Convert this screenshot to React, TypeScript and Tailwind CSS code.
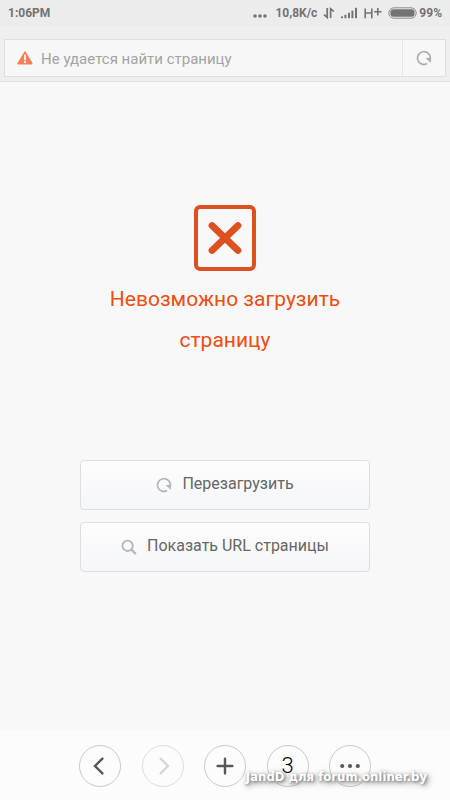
import type { ReactNode } from 'react';

interface IconProps {
  className?: string;
}

function ReloadIcon({ className = '' }: IconProps) {
  return (
    <svg viewBox="0 0 16 16" className={className} fill="none" aria-hidden="true">
      <path
        d="M11.2 13.6 A6.4 6.4 0 1 1 14.3 8.6"
        stroke="currentColor"
        strokeWidth="1.7"
      />
      <path d="M9.6 8.2 L15.2 7.4 L14.8 12.8 Z" fill="currentColor" />
    </svg>
  );
}

function SearchIcon({ className = '' }: IconProps) {
  return (
    <svg viewBox="0 0 16 16" className={className} fill="none" stroke="currentColor" aria-hidden="true">
      <circle cx="6.6" cy="6.8" r="5.2" strokeWidth="1.8" />
      <path d="M10.2 10.4 L14.8 15" strokeWidth="2.2" />
    </svg>
  );
}

function WarningIcon({ className = '' }: IconProps) {
  return (
    <svg viewBox="0 0 16 14" className={className} aria-hidden="true">
      <path
        d="M8 1.4 L14.6 12.4 H1.4 Z"
        fill="#fb7f56"
        stroke="#fb7f56"
        strokeWidth="2"
        strokeLinejoin="round"
      />
      <path d="M8 4.4 V8.4" stroke="#fff" strokeWidth="1.8" strokeLinecap="round" />
      <circle cx="8" cy="11.2" r="1.1" fill="#fff" />
    </svg>
  );
}

function BrokenPageIcon() {
  return (
    <svg viewBox="0 0 62 66" className="h-[66px] w-[62px]" fill="none" stroke="#dd5120" aria-hidden="true">
      <rect x="2" y="2" width="58" height="62" rx="4" strokeWidth="4" />
      <path d="M18 20.5 L44 45.5 M44 20.5 L18 45.5" strokeWidth="6.8" strokeLinecap="round" />
    </svg>
  );
}

function StatusBar() {
  return (
    <div className="flex h-[26px] items-center justify-between bg-[#ececec] px-2 text-xs font-bold text-[#737373]">
      <span>1:06PM</span>
      <div className="flex items-center">
        <svg viewBox="0 0 14 12" className="mr-2 h-3 w-3.5" fill="currentColor" aria-hidden="true">
          <circle cx="2" cy="9" r="1.8" />
          <circle cx="7" cy="9" r="1.8" />
          <circle cx="12" cy="9" r="1.8" />
        </svg>
        <span>10,8K/c</span>
        <svg viewBox="0 0 12 12" className="ml-1.5 h-3 w-3" fill="none" stroke="currentColor" strokeWidth="1.7" aria-hidden="true">
          <path d="M4.2 1 V10.4 L1 7.6" />
          <path d="M7.6 11 V1.8 L10.8 4.4" />
        </svg>
        <svg viewBox="0 0 17 12" className="ml-1.5 h-3 w-[17px]" fill="currentColor" aria-hidden="true">
          <rect x="0" y="9.4" width="2" height="1.8" />
          <rect x="3.4" y="7.8" width="2" height="3.4" />
          <rect x="7" y="5.8" width="2" height="5.4" />
          <rect x="10.4" y="3.6" width="2" height="7.6" />
          <rect x="14" y="0.8" width="2" height="10.4" />
        </svg>
        <svg viewBox="0 0 18 12" className="ml-1.5 h-3 w-[18px]" fill="none" stroke="currentColor" strokeWidth="1.6" aria-hidden="true">
          <path d="M1.2 1.4 V11.2 M7.8 1.4 V11.2 M1.2 6 H7.8" />
          <path d="M13.8 1 V8.4 M10.2 4.7 H17.6" />
        </svg>
        <svg viewBox="0 0 29 12" className="ml-1.5 h-3 w-[29px]" aria-hidden="true">
          <rect x="0.8" y="0.8" width="27.4" height="10.4" rx="5.2" fill="none" stroke="#8c8c8c" />
          <rect x="2.4" y="2.2" width="24.2" height="7.6" rx="3.2" fill="#737373" />
        </svg>
        <span className="ml-0.5">99%</span>
      </div>
    </div>
  );
}

function AddressBar() {
  return (
    <div className="px-1 pt-[13px] pb-1">
      <div className="flex h-[38px] border border-[#dfdfdf] bg-[#f7f7f7]">
        <div className="flex min-w-0 flex-1 items-center pl-3">
          <WarningIcon className="h-3.5 w-4 shrink-0" />
          <input
            type="text"
            aria-label="Адрес"
            defaultValue="Не удается найти страницу"
            className="ml-2 min-w-0 flex-1 bg-transparent pt-0.5 text-[15px] text-[#a3a3a3] outline-none"
          />
        </div>
        <button
          type="button"
          aria-label="Обновить"
          className="flex w-[43px] items-center justify-center border-l border-[#e6e6e6] text-[#adadad]"
        >
          <ReloadIcon className="size-4" />
        </button>
      </div>
    </div>
  );
}

interface PageButtonProps {
  icon: ReactNode;
  label: string;
}

function PageButton({ icon, label }: PageButtonProps) {
  return (
    <button
      type="button"
      className="flex h-[50px] w-full items-center justify-center gap-2.5 rounded border border-[#dcdee0] bg-linear-to-b from-[#fdfdfd] to-[#f5f6f9] pb-0.5 text-base text-[#666]"
    >
      <span className="pt-0.5 text-[#b3b5b8]">{icon}</span>
      {label}
    </button>
  );
}

interface ToolButtonProps {
  label: string;
  disabled?: boolean;
  children: ReactNode;
}

function ToolButton({ label, disabled = false, children }: ToolButtonProps) {
  return (
    <button
      type="button"
      aria-label={label}
      disabled={disabled}
      className={`flex size-[42px] items-center justify-center rounded-full border ${
        disabled ? 'border-[#dedede] text-[#d6d6d6]' : 'border-[#cbcbcb] text-[#585858]'
      }`}
    >
      {children}
    </button>
  );
}

function Toolbar() {
  return (
    <nav className="relative flex h-[69px] items-center justify-between bg-[#fcfcfc] px-[79px]">
      <ToolButton label="Назад">
        <svg viewBox="0 0 20 20" className="size-5" fill="none" stroke="currentColor" strokeWidth="2.4" strokeLinecap="round" aria-hidden="true">
          <path d="M12.4 2.6 L5 10 L12.4 17.4" />
        </svg>
      </ToolButton>
      <ToolButton label="Вперед" disabled>
        <svg viewBox="0 0 20 20" className="size-5" fill="none" stroke="currentColor" strokeWidth="2.2" strokeLinecap="round" aria-hidden="true">
          <path d="M7.6 2.6 L15 10 L7.6 17.4" />
        </svg>
      </ToolButton>
      <ToolButton label="Новая вкладка">
        <svg viewBox="0 0 20 20" className="size-5" fill="none" stroke="currentColor" strokeWidth="2.4" strokeLinecap="round" aria-hidden="true">
          <path d="M10 2.6 V17.4 M2.6 10 H17.4" />
        </svg>
      </ToolButton>
      <ToolButton label="Вкладки: 3">
        <span className="text-[22px] leading-none font-light text-black">3</span>
      </ToolButton>
      <ToolButton label="Меню">
        <svg viewBox="0 0 20 20" className="size-5" fill="currentColor" aria-hidden="true">
          <circle cx="2.2" cy="10" r="2.1" />
          <circle cx="10" cy="10" r="2.1" />
          <circle cx="17.8" cy="10" r="2.1" />
        </svg>
      </ToolButton>
      <span className="pointer-events-none absolute right-[23px] bottom-[15px] font-['DejaVu_Sans_Condensed','DejaVu_Sans',sans-serif] text-[13px] leading-4 font-bold whitespace-nowrap text-white [text-shadow:1px_1px_3px_#777,2px_2px_6px_#777]">
        JandD для forum.onliner.by
      </span>
    </nav>
  );
}

export default function App() {
  return (
    <div className="flex min-h-screen flex-col bg-[#f8f8f8] font-[Roboto,sans-serif]">
      <header className="border-b border-[#dfdfdf] bg-[#efefef]">
        <StatusBar />
        <AddressBar />
      </header>

      <main className="flex flex-1 flex-col items-center px-20 pt-[123px]">
        <BrokenPageIcon />
        <h1 className="mt-2 text-center text-[21px] leading-[41px] text-[#f04c13]">
          Невозможно загрузить страницу
        </h1>
        <div className="mt-[99px] flex w-full flex-col gap-3">
          <PageButton icon={<ReloadIcon className="size-4" />} label="Перезагрузить" />
          <PageButton icon={<SearchIcon className="size-4" />} label="Показать URL страницы" />
        </div>
      </main>

      <Toolbar />
    </div>
  );
}
